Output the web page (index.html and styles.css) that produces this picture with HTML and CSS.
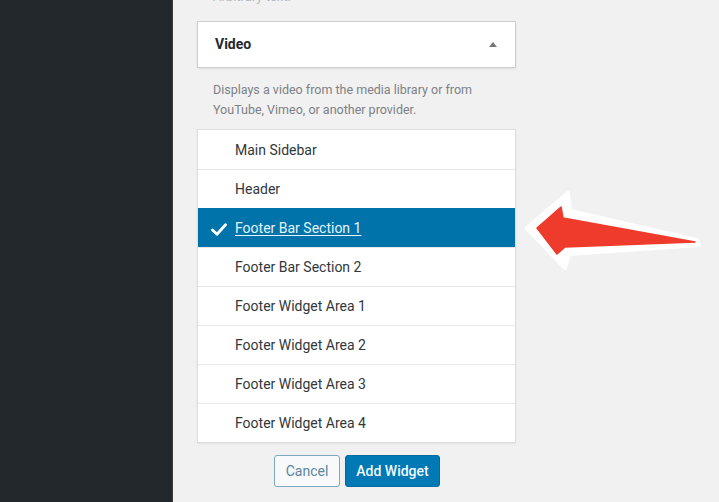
FILE: index.html
```html
<!DOCTYPE html>
<html>
<head>
<meta charset="utf-8">
<link rel="stylesheet" href="styles.css">
</head>
<body>
<div class="screen">
  <aside class="sidebar"></aside>
  <main class="main">
    <div class="panel">
      <p class="prev-text">Arbitrary text.</p>
      <div class="widget-head">
        <span class="widget-title">Video</span>
        <span class="caret"></span>
      </div>
      <p class="desc">Displays a video from the media library or from YouTube, Vimeo, or another provider.</p>
      <ul class="areas">
        <li class="area">Main Sidebar</li>
        <li class="area">Header</li>
        <li class="area selected"><span class="check">
          <svg width="16" height="13" viewBox="0 0 16 13"><path d="M1.5 7 L6 11.2 L14.5 1.8" fill="none" stroke="#fff" stroke-width="2.8" stroke-linecap="round" stroke-linejoin="round"/></svg>
        </span><a class="area-link">Footer Bar Section 1</a></li>
        <li class="area">Footer Bar Section 2</li>
        <li class="area">Footer Widget Area 1</li>
        <li class="area">Footer Widget Area 2</li>
        <li class="area">Footer Widget Area 3</li>
        <li class="area">Footer Widget Area 4</li>
      </ul>
      <div class="actions">
        <button class="btn btn-cancel">Cancel</button>
        <button class="btn btn-primary">Add Widget</button>
      </div>
    </div>
    <svg class="pointer" width="190" height="100" viewBox="520 185 190 100">
      <path d="M527 228 L568 193 L570 211 L697 240 L699 245 L569 254 L565 268 Z" fill="#fff" stroke="#fff" stroke-width="4" stroke-linejoin="round"/>
      <path d="M537 228 L561 207 L563 218 L695 242 L565 247 L557 254 Z" fill="#ee3b2c" stroke="#ee3b2c" stroke-width="1.5" stroke-linejoin="round"/>
    </svg>
  </main>
</div>
</body>
</html>
```
FILE: styles.css
```css
html, body {
  margin: 0;
  padding: 0;
  height: 100%;
  overflow: hidden;
}
body {
  font-family: Roboto, "Liberation Sans", sans-serif;
  background: #f1f1f1;
}
.screen {
  display: flex;
  height: 502px;
}
.sidebar {
  width: 173px;
  flex: none;
  background: #23282d;
  border-right: 1px solid #3a3f44;
  box-sizing: border-box;
}
.main {
  flex: 1;
  position: relative;
  padding-left: 24px;
  background: #f1f1f1;
}
.panel {
  width: 319px;
  margin-top: -17px;
}
.prev-text {
  margin: 0 0 11px 16px;
  font-size: 13px;
  line-height: 27px;
  color: #b4b8bc;
}
.widget-head {
  height: 45px;
  border: 1px solid #cdd0d3;
  background: #fff;
  box-shadow: 0 1px 2px rgba(0,0,0,0.08);
  display: flex;
  align-items: center;
  justify-content: space-between;
  padding: 0 18px 0 17px;
}
.widget-title {
  font-weight: 700;
  font-size: 14px;
  color: #23282d;
  margin-top: -1px;
}
.caret {
  width: 0;
  height: 0;
  border-left: 4px solid transparent;
  border-right: 4px solid transparent;
  border-bottom: 5px solid #72777c;
}
.desc {
  margin: 12px 0 9px 16px;
  font-size: 12.5px;
  line-height: 20px;
  color: #7c8186;
}
.areas {
  list-style: none;
  margin: 0;
  padding: 0;
  background: #fff;
  border: 1px solid #dcdfe2;
  box-shadow: 0 1px 2px rgba(0,0,0,0.06);
}
.area {
  height: 38px;
  border-top: 1px solid #e6e8ea;
  display: flex;
  align-items: center;
  padding-left: 37px;
  font-size: 14px;
  color: #32373c;
}
.area:first-child {
  border-top: none;
  height: 39px;
}
.area.selected {
  background: #0073aa;
  border-top-color: #0073aa;
  padding-left: 13px;
}
.check {
  width: 24px;
  display: flex;
  align-items: center;
  padding-top: 3px;
}
.area-link {
  color: #e4f4fb;
  text-decoration: underline;
  text-underline-offset: 2px;
}
.actions {
  display: flex;
  justify-content: center;
  gap: 5px;
  margin-top: 12px;
  padding-left: 1px;
}
.btn {
  height: 32px;
  border-radius: 3px;
  font-family: Roboto, "Liberation Sans", sans-serif;
  font-size: 14px;
  padding: 0;
  white-space: nowrap;
  cursor: pointer;
}
.btn-cancel {
  width: 66px;
  background: #f7f9fa;
  border: 1px solid #7eaac0;
  color: #5c87a0;
}
.btn-primary {
  width: 95px;
  background: #0079b5;
  border: 1px solid #006b9f;
  color: #f0f8fc;
  font-weight: 500;
}
.pointer {
  position: absolute;
  left: 347px;
  top: 185px;
}
```
